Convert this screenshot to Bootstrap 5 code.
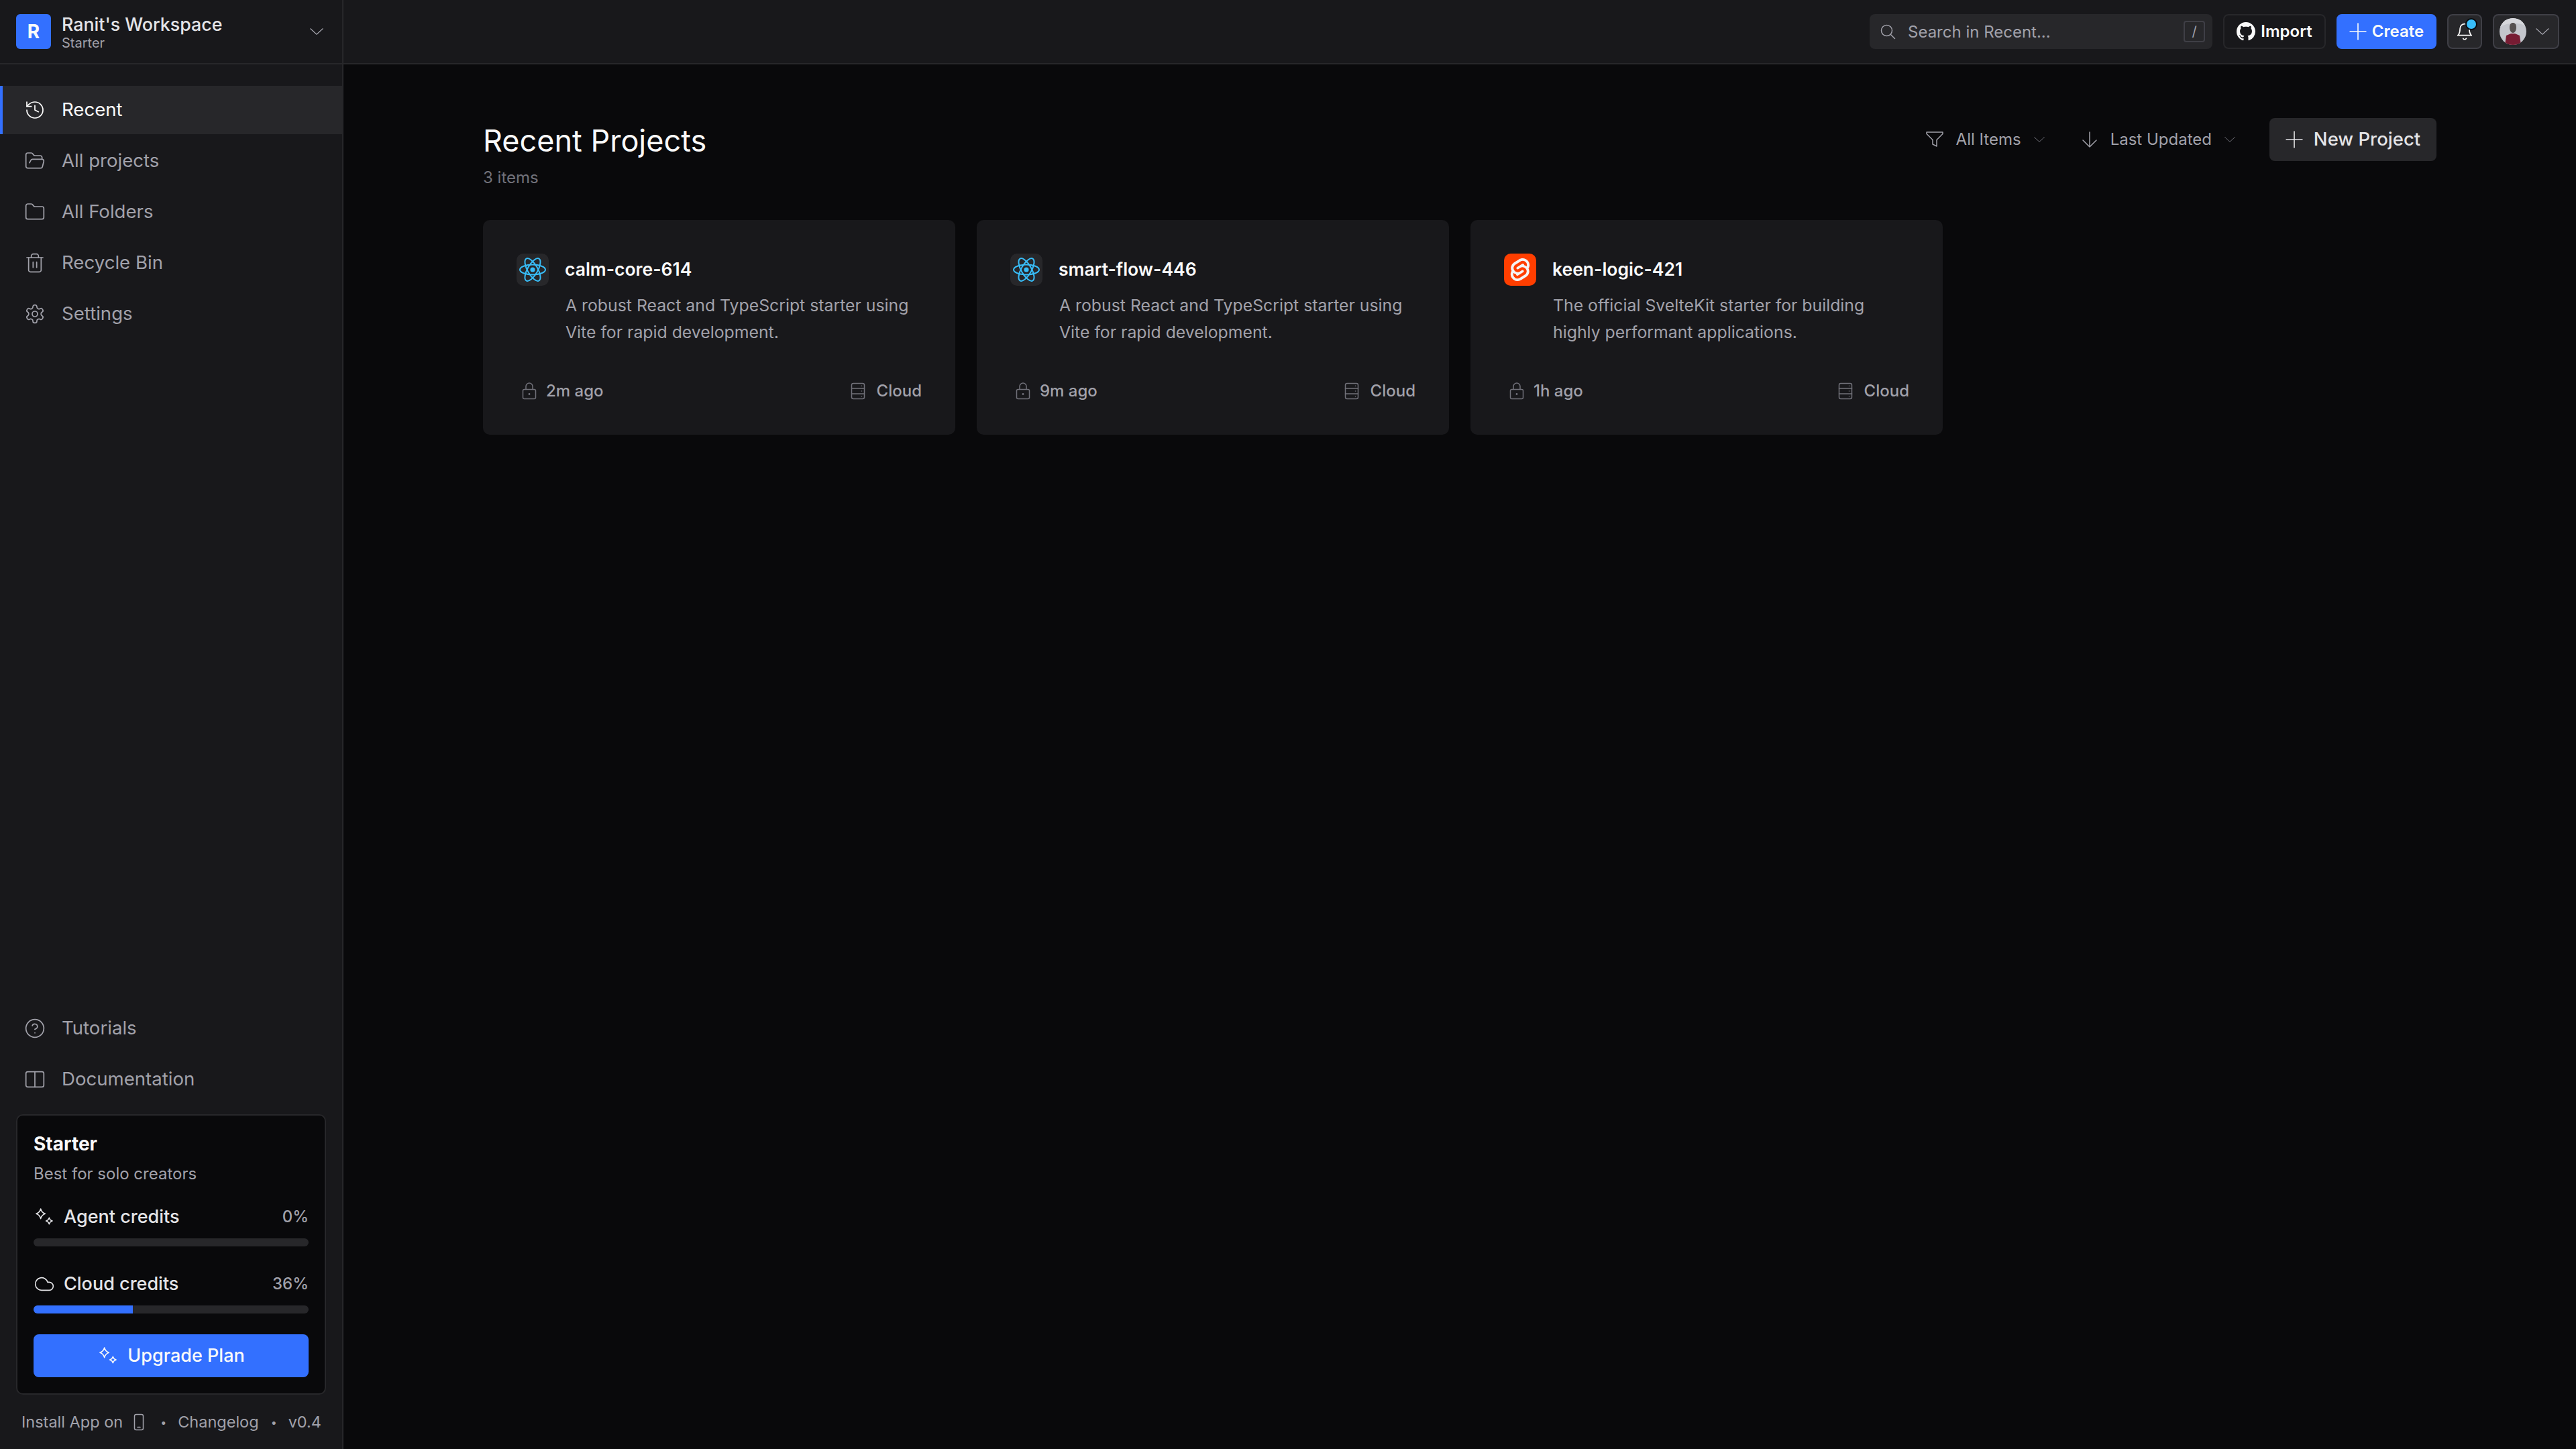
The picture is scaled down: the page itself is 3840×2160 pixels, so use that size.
<!DOCTYPE html>
<html lang="en">
<head>
    <meta charset="UTF-8">
    <title>Recent Projects</title>
    <link href="https://cdn.jsdelivr.net/npm/bootstrap@5.3.0/dist/css/bootstrap.min.css" rel="stylesheet">
    <style>
        body { background: #09090b; color: #fafafa; font-family: "Inter", "Liberation Sans", sans-serif; font-size: 28px; overflow: hidden; }
        svg.ico { fill: none; stroke: currentColor; stroke-width: 1.5; stroke-linecap: round; stroke-linejoin: round; flex-shrink: 0; }
        .app-shell { height: 2160px; }

        /* sidebar */
        .side-panel { width: 512px; background: #18181b; border-right: 2px solid #27272a; }
        .side-head { height: 96px; padding: 0 28px 0 24px; border-bottom: 2px solid #27272a; gap: 16px; }
        .ws-logo { width: 52px; height: 52px; background: #3370ff; border-radius: 6px; font-size: 28px; font-weight: 700; }
        .ws-name { font-size: 26.8px; font-weight: 500; line-height: 34px; color: #e4e4e7; }
        .ws-plan { font-size: 20px; line-height: 22px; color: #a1a1aa; }
        .head-arrow { color: #a1a1aa; }
        .side-nav { padding-top: 32px; gap: 4px; }
        .side-link { height: 72px; padding-left: 32px; gap: 24px; color: #a1a1aa; text-decoration: none; font-size: 27.6px; font-weight: 400; border-left: 4px solid transparent; }
        .side-link svg.ico { stroke-width: 1.3; }
        .side-link.active-link { background: #27272a; color: #fafafa; border-left-color: #3370ff; }
        .plan-box { margin: 0 24px; padding: 24px; height: 418px; background: #09090b; border: 2px solid #27272a; border-radius: 10px; }
        .plan-title { font-size: 28px; font-weight: 700; line-height: 36px; }
        .plan-sub { font-size: 24px; line-height: 30px; color: #a1a1aa; margin-top: 12px; margin-bottom: 33px; }
        .credit-row { font-size: 27px; font-weight: 500; color: #e4e4e7; line-height: 32px; gap: 13px; }
        .credit-row svg.ico { stroke-width: 1.2; }
        .credit-next { margin-top: 40px; }
        .credit-pct { font-size: 24px; color: #a1a1aa; }
        .credit-bar { height: 12px; background: #27272a; border-radius: 6px; overflow: hidden; }
        .credit-fill { background: #3370ff; height: 100%; }
        .upgrade-btn { height: 64px; background: #3370ff; border: 0; border-radius: 8px; color: #fafafa; font-size: 27px; font-weight: 500; gap: 13px; }
        .upgrade-btn svg.ico { stroke-width: 1.2; }
        .side-foot { height: 81px; padding-left: 32px; font-size: 23.5px; color: #a1a1aa; font-weight: 400; }
        .foot-sep { width: 8px; margin: 0 18px; font-size: 16px; text-align: center; }
        .phone-ico { margin: 0 6px 0 16px; }

        /* top bar */
        .top-bar { height: 96px; background: #18181b; border-bottom: 2px solid #27272a; padding-right: 25px; gap: 16px; }
        .search-box { width: 511px; height: 52px; background: #27272a; border-radius: 8px; padding: 0 11px 0 15px; color: #a1a1aa; font-size: 24px; font-weight: 400; }
        .search-text { padding: 2px 0 0 2px; }
        .search-key { width: 32px; height: 32px; border: 2px solid #3f3f46; border-radius: 4px; font-size: 20px; }
        .top-btn { height: 52px; border: 2px solid #27272a; border-radius: 8px; background: transparent; color: #fafafa; font-size: 24px; font-weight: 600; padding: 0; }
        .btn-import { width: 153px; background: #18181b; gap: 8px; }
        .btn-create { width: 149px; background: #3370ff; border-color: #3370ff; gap: 8px; }
        .btn-bell { width: 52px; background: #27272a; border-color: #3f3f46; position: relative; }
        .bell-dot { position: absolute; top: 4px; right: 5px; width: 18px; height: 18px; border-radius: 50%; background: #38bdf8; border: 2.5px solid #09090b; }
        .btn-user { width: 99px; background: #27272a; border-color: #3f3f46; padding-left: 8px; gap: 14px; justify-content: flex-start; }
        .user-pic { width: 40px; height: 40px; border-radius: 50%; }
        .user-arrow { color: #a1a1aa; }

        /* main */
        .page-body { padding: 80px 208px 0; }
        .page-title { font-size: 45px; font-weight: 400; line-height: 58px; margin: 5px 0 0; color: #fafafa; }
        .page-count { font-size: 24px; line-height: 30px; color: #71717a; margin-top: 11px; }
        .filter-item { color: #a1a1aa; font-size: 24px; font-weight: 400; gap: 19px; }
        .filter-first { margin-right: 55px; }
        .filter-last { margin-right: 51px; }
        .new-btn { height: 64px; width: 249px; background: #27272a; border: 0; border-radius: 8px; color: #e4e4e7; font-size: 27.5px; font-weight: 500; gap: 16px; padding: 0; }
        .project-grid { display: grid; grid-template-columns: repeat(4, 704px); gap: 32px; margin-top: 48px; }
        .project-tile { height: 320px; background: #18181b; border-radius: 10px; padding: 50px 50px 0; }
        .tile-icon { width: 48px; height: 48px; border-radius: 10px; background: #27272a; }
        .tile-icon.svelte-bg { background: #ff3e00; }
        .tile-name { font-size: 26.5px; font-weight: 600; color: #fafafa; }
        .tile-desc { font-size: 24.8px; line-height: 40px; color: #a1a1aa; margin: 9px 0 0 73px; }
        .tile-foot { margin-top: 53px; font-size: 24px; font-weight: 500; color: #a1a1aa; line-height: 30px; }
        .foot-ico { color: #71717a; }
        .foot-left { margin-left: 8px; gap: 14px; }
        .foot-right { gap: 17px; }
    </style>
</head>
<body>
<svg width="0" height="0" class="position-absolute">
    <defs>
        <symbol id="i-down" viewBox="0 0 24 24"><path d="M1 7l11 10 11-10"/></symbol>
        <symbol id="i-plus" viewBox="0 0 24 24"><path d="M12 1v22M1 12h22"/></symbol>
        <symbol id="i-spark" viewBox="0 0 24 24"><path d="M8 3c.8 3.2 2 4.5 5 5.5-3 1-4.2 2.3-5 5.5-.8-3.2-2-4.5-5-5.5 3-1 4.2-2.3 5-5.5zM17.5 13c.5 2 1.3 2.8 3.5 3.5-2.2.7-3 1.5-3.5 3.5-.5-2-1.3-2.8-3.5-3.5 2.2-.7 3-1.5 3.5-3.5z"/></symbol>
        <symbol id="i-lock" viewBox="0 0 22 26"><rect x="1.5" y="10.5" width="19" height="14" rx="2"/><path d="M6 10.5V6a5 5 0 0 1 10 0v4.5"/><circle cx="11" cy="17.5" r=".7" fill="currentColor"/></symbol>
        <symbol id="i-server" viewBox="0 0 22 26"><rect x="1.5" y="1.5" width="19" height="23" rx="2.5"/><path d="M1.5 9h19M1.5 17h19M16.5 5.2h.01M16.5 13h.01M16.5 20.8h.01"/></symbol>
        <symbol id="i-react" viewBox="0 0 48 48">
            <circle cx="24" cy="24" r="3.6" fill="#38bdf8" stroke="none"/>
            <g fill="none" stroke="#38bdf8" stroke-width="2">
                <ellipse cx="24" cy="24" rx="19" ry="7.5"/>
                <ellipse cx="24" cy="24" rx="19" ry="7.5" transform="rotate(60 24 24)"/>
                <ellipse cx="24" cy="24" rx="19" ry="7.5" transform="rotate(120 24 24)"/>
            </g>
        </symbol>
    </defs>
</svg>
<div class="app-shell d-flex">
    <aside class="side-panel d-flex flex-column flex-shrink-0">
        <div class="side-head d-flex align-items-center">
            <div class="ws-logo d-flex align-items-center justify-content-center">R</div>
            <div class="flex-grow-1">
                <div class="ws-name">Ranit's Workspace</div>
                <div class="ws-plan">Starter</div>
            </div>
            <svg class="ico head-arrow" width="20" height="20"><use href="#i-down"/></svg>
        </div>
        <nav class="side-nav d-flex flex-column flex-grow-1">
            <a href="#" class="side-link active-link d-flex align-items-center">
                <svg class="ico" width="32" height="32" viewBox="0 0 24 24"><path d="M3 12a9 9 0 1 0 9-9 9.75 9.75 0 0 0-6.74 2.74L3 8"/><path d="M3 3v5h5"/><path d="M12 7v5l4 2"/></svg>Recent</a>
            <a href="#" class="side-link d-flex align-items-center">
                <svg class="ico" width="32" height="32" viewBox="0 0 24 24"><path d="m6 14 1.5-2.9A2 2 0 0 1 9.24 10H20a2 2 0 0 1 1.94 2.5l-1.54 6a2 2 0 0 1-1.95 1.5H4a2 2 0 0 1-2-2V5a2 2 0 0 1 2-2h3.9a2 2 0 0 1 1.69.9l.81 1.2a2 2 0 0 0 1.67.9H18a2 2 0 0 1 2 2v2"/></svg>All projects</a>
            <a href="#" class="side-link d-flex align-items-center">
                <svg class="ico" width="32" height="32" viewBox="0 0 24 24"><path d="M20 20a2 2 0 0 0 2-2V8a2 2 0 0 0-2-2h-7.9a2 2 0 0 1-1.69-.9L9.6 3.9A2 2 0 0 0 7.93 3H4a2 2 0 0 0-2 2v13a2 2 0 0 0 2 2Z"/></svg>All Folders</a>
            <a href="#" class="side-link d-flex align-items-center">
                <svg class="ico" width="32" height="32" viewBox="0 0 24 24"><path d="M3 6h18"/><path d="M19 6v14c0 1-1 2-2 2H7c-1 0-2-1-2-2V6"/><path d="M8 6V4c0-1 1-2 2-2h4c1 0 2 1 2 2v2"/><path d="M10 11v6M14 11v6"/></svg>Recycle Bin</a>
            <a href="#" class="side-link d-flex align-items-center">
                <svg class="ico" width="32" height="32" viewBox="0 0 24 24"><path d="M12.22 2h-.44a2 2 0 0 0-2 2v.18a2 2 0 0 1-1 1.73l-.43.25a2 2 0 0 1-2 0l-.15-.08a2 2 0 0 0-2.73.73l-.22.38a2 2 0 0 0 .73 2.73l.15.1a2 2 0 0 1 1 1.72v.51a2 2 0 0 1-1 1.74l-.15.09a2 2 0 0 0-.73 2.73l.22.38a2 2 0 0 0 2.73.73l.15-.08a2 2 0 0 1 2 0l.43.25a2 2 0 0 1 1 1.73V20a2 2 0 0 0 2 2h.44a2 2 0 0 0 2-2v-.18a2 2 0 0 1 1-1.73l.43-.25a2 2 0 0 1 2 0l.15.08a2 2 0 0 0 2.73-.73l.22-.39a2 2 0 0 0-.73-2.73l-.15-.08a2 2 0 0 1-1-1.74v-.5a2 2 0 0 1 1-1.74l.15-.09a2 2 0 0 0 .73-2.73l-.22-.38a2 2 0 0 0-2.73-.73l-.15.08a2 2 0 0 1-2 0l-.43-.25a2 2 0 0 1-1-1.73V4a2 2 0 0 0-2-2z"/><circle cx="12" cy="12" r="3"/></svg>Settings</a>
            <a href="#" class="side-link d-flex align-items-center mt-auto">
                <svg class="ico" width="32" height="32" viewBox="0 0 24 24"><circle cx="12" cy="12" r="10"/><path d="M9.1 9a3 3 0 0 1 5.8 1c0 2-3 3-3 3"/><path d="M12 17h.01"/></svg>Tutorials</a>
            <a href="#" class="side-link d-flex align-items-center">
                <svg class="ico" width="32" height="32" viewBox="0 0 24 24"><rect x="2" y="3.5" width="20" height="17" rx="2"/><path d="M12 3.5v17"/></svg>Documentation</a>
        </nav>
        <div class="plan-box mt-3 d-flex flex-column">
            <div class="plan-title">Starter</div>
            <div class="plan-sub">Best for solo creators</div>
            <div class="credit-row d-flex align-items-center">
                <svg class="ico" width="32" height="32"><use href="#i-spark"/></svg>
                <span class="flex-grow-1">Agent credits</span><span class="credit-pct">0%</span>
            </div>
            <div class="credit-bar mt-3"></div>
            <div class="credit-row credit-next d-flex align-items-center">
                <svg class="ico" width="32" height="32" viewBox="0 0 24 24"><path d="M17.5 19H9a7 7 0 1 1 6.71-9h1.79a4.5 4.5 0 1 1 0 9Z"/></svg>
                <span class="flex-grow-1">Cloud credits</span><span class="credit-pct">36%</span>
            </div>
            <div class="credit-bar mt-3"><div class="credit-fill" style="width: 36%"></div></div>
            <button class="upgrade-btn d-flex align-items-center justify-content-center mt-auto" type="button">
                <svg class="ico" width="32" height="32"><use href="#i-spark"/></svg>Upgrade Plan</button>
        </div>
        <div class="side-foot d-flex align-items-center">
            <span>Install App on</span>
            <svg class="ico phone-ico" width="16" height="26" viewBox="0 0 16 26"><rect x="1.5" y="1.5" width="13" height="23" rx="2.5"/><path d="M6 20.5h4"/></svg>
            <span class="foot-sep">•</span><span>Changelog</span><span class="foot-sep">•</span><span>v0.4</span>
        </div>
    </aside>

    <div class="flex-grow-1 d-flex flex-column">
        <header class="top-bar d-flex align-items-center justify-content-end">
            <div class="search-box d-flex align-items-center">
                <svg class="ico me-3" width="24" height="24" viewBox="0 0 24 24"><circle cx="10.5" cy="10.5" r="8"/><path d="m16.5 16.5 6 6"/></svg>
                <span class="search-text flex-grow-1">Search in Recent...</span>
                <span class="search-key d-flex align-items-center justify-content-center">/</span>
            </div>
            <button class="top-btn btn-import d-flex align-items-center justify-content-center" type="button">
                <svg width="28" height="28" viewBox="0 0 24 24" fill="currentColor"><path d="M12 0C5.37 0 0 5.37 0 12c0 5.3 3.44 9.8 8.2 11.39.6.11.82-.26.82-.58v-2.03c-3.34.73-4.04-1.61-4.04-1.61-.55-1.39-1.33-1.76-1.33-1.76-1.09-.74.08-.73.08-.73 1.2.08 1.84 1.24 1.84 1.24 1.07 1.83 2.81 1.3 3.49 1 .11-.78.42-1.31.76-1.61-2.67-.3-5.47-1.33-5.47-5.93 0-1.31.47-2.38 1.24-3.22-.12-.3-.54-1.52.12-3.18 0 0 1.01-.32 3.3 1.23.96-.27 1.98-.4 3-.4s2.04.13 3 .4c2.29-1.55 3.3-1.23 3.3-1.23.66 1.66.24 2.88.12 3.18.77.84 1.24 1.91 1.24 3.22 0 4.61-2.81 5.63-5.48 5.92.43.37.81 1.1.81 2.22v3.29c0 .32.22.7.82.58A12 12 0 0 0 24 12c0-6.63-5.37-12-12-12z"/></svg>Import</button>
            <button class="top-btn btn-create d-flex align-items-center justify-content-center" type="button">
                <svg class="ico" width="26" height="26"><use href="#i-plus"/></svg>Create</button>
            <button class="top-btn btn-bell d-flex align-items-center justify-content-center" type="button">
                <svg class="ico" width="28" height="32" viewBox="0 0 24 28"><path d="M6 10a6 6 0 0 1 12 0c0 7 3 9 3 9H3s3-2 3-9"/><path d="M10 23a2.2 2.2 0 0 0 4 0"/></svg>
                <span class="bell-dot"></span>
            </button>
            <button class="top-btn btn-user d-flex align-items-center" type="button">
                <svg class="user-pic" viewBox="0 0 40 40"><rect width="40" height="40" fill="#c4c6cc"/><path d="M0 0h40v12C30 6 10 6 0 14z" fill="#d6d7db"/><path d="M8 40l2-14 7-3h6l7 3 2 14z" fill="#771c33"/><path d="M15 14c0-5 2-7 5-7s5 2 5 7c0 4-2 8-5 8s-5-4-5-8z" fill="#55504f"/></svg>
                <svg class="ico user-arrow" width="20" height="20"><use href="#i-down"/></svg>
            </button>
        </header>
        <main class="page-body flex-grow-1">
            <div class="d-flex justify-content-between align-items-start">
                <div>
                    <h1 class="page-title">Recent Projects</h1>
                    <div class="page-count">3 items</div>
                </div>
                <div class="d-flex align-items-center">
                    <div class="filter-item filter-first d-flex align-items-center">
                        <svg class="ico" width="26" height="24" viewBox="0 0 26 24"><path d="M1 1h24v2.5l-9 9V22l-6-3v-6.500l-9-9z"/></svg>
                        <span>All Items</span>
                        <svg class="ico foot-ico" width="16" height="16"><use href="#i-down"/></svg>
                    </div>
                    <div class="filter-item filter-last d-flex align-items-center">
                        <svg class="ico" width="24" height="24" viewBox="0 0 24 24"><path d="M12 1v22M2 13l10 10 10-10"/></svg>
                        <span>Last Updated</span>
                        <svg class="ico foot-ico" width="16" height="16"><use href="#i-down"/></svg>
                    </div>
                    <button class="new-btn d-flex align-items-center justify-content-center" type="button">
                        <svg class="ico" width="26" height="26"><use href="#i-plus"/></svg>New Project</button>
                </div>
            </div>
            <div class="project-grid">
                <div class="project-tile">
                    <div class="d-flex align-items-center gap-4">
                        <span class="tile-icon d-flex"><svg width="48" height="48"><use href="#i-react"/></svg></span>
                        <span class="tile-name">calm-core-614</span>
                    </div>
                    <p class="tile-desc">A robust React and TypeScript starter using Vite for rapid development.</p>
                    <div class="tile-foot d-flex justify-content-between">
                        <span class="foot-left d-flex align-items-center"><svg class="ico foot-ico" width="22" height="26"><use href="#i-lock"/></svg>2m ago</span>
                        <span class="foot-right d-flex align-items-center"><svg class="ico foot-ico" width="22" height="26"><use href="#i-server"/></svg>Cloud</span>
                    </div>
                </div>
                <div class="project-tile">
                    <div class="d-flex align-items-center gap-4">
                        <span class="tile-icon d-flex"><svg width="48" height="48"><use href="#i-react"/></svg></span>
                        <span class="tile-name">smart-flow-446</span>
                    </div>
                    <p class="tile-desc">A robust React and TypeScript starter using Vite for rapid development.</p>
                    <div class="tile-foot d-flex justify-content-between">
                        <span class="foot-left d-flex align-items-center"><svg class="ico foot-ico" width="22" height="26"><use href="#i-lock"/></svg>9m ago</span>
                        <span class="foot-right d-flex align-items-center"><svg class="ico foot-ico" width="22" height="26"><use href="#i-server"/></svg>Cloud</span>
                    </div>
                </div>
                <div class="project-tile">
                    <div class="d-flex align-items-center gap-4">
                        <span class="tile-icon svelte-bg d-flex align-items-center justify-content-center">
                            <svg width="34" height="34" viewBox="0 0 24 24" fill="#f4f4f5" fill-rule="evenodd"><path d="M20.68 3.17C18.454-.015 14.05-.96 10.864 1.07L5.275 4.63A6.41 6.41 0 0 0 2.38 8.93a6.754 6.754 0 0 0 .665 4.336 6.436 6.436 0 0 0-.96 2.397 6.826 6.826 0 0 0 1.166 5.167c2.229 3.19 6.63 4.135 9.816 2.108l5.59-3.562a6.41 6.41 0 0 0 2.895-4.295 6.755 6.755 0 0 0-.665-4.336 6.437 6.437 0 0 0 .96-2.397 6.827 6.827 0 0 0-1.165-5.168zM10.354 21.125a4.44 4.44 0 0 1-4.765-1.767 4.109 4.109 0 0 1-.703-3.107 3.898 3.898 0 0 1 .134-.522l.105-.321.287.21a7.21 7.21 0 0 0 2.186 1.092l.208.063-.02.208a1.253 1.253 0 0 0 .226.83 1.337 1.337 0 0 0 1.435.533 1.231 1.231 0 0 0 .343-.15l5.59-3.562a1.164 1.164 0 0 0 .524-.778 1.242 1.242 0 0 0-.211-.937 1.338 1.338 0 0 0-1.435-.533 1.23 1.23 0 0 0-.343.15l-2.133 1.36a4.078 4.078 0 0 1-1.135.499 4.44 4.44 0 0 1-4.765-1.766 4.108 4.108 0 0 1-.702-3.108 3.855 3.855 0 0 1 1.742-2.582l5.589-3.563a4.072 4.072 0 0 1 1.135-.499 4.44 4.44 0 0 1 4.765 1.767 4.109 4.109 0 0 1 .703 3.107 3.943 3.943 0 0 1-.134.522l-.105.321-.286-.21a7.204 7.204 0 0 0-2.187-1.093l-.208-.063.02-.207a1.255 1.255 0 0 0-.226-.831 1.337 1.337 0 0 0-1.435-.532 1.231 1.231 0 0 0-.343.15L8.62 9.368a1.162 1.162 0 0 0-.524.778 1.24 1.24 0 0 0 .211.937 1.338 1.338 0 0 0 1.435.533 1.235 1.235 0 0 0 .344-.151l2.132-1.36a4.067 4.067 0 0 1 1.135-.498 4.44 4.44 0 0 1 4.765 1.766 4.108 4.108 0 0 1 .702 3.108 3.857 3.857 0 0 1-1.742 2.583l-5.589 3.562a4.072 4.072 0 0 1-1.135.499z"/></svg>
                        </span>
                        <span class="tile-name">keen-logic-421</span>
                    </div>
                    <p class="tile-desc">The official SvelteKit starter for building highly performant applications.</p>
                    <div class="tile-foot d-flex justify-content-between">
                        <span class="foot-left d-flex align-items-center"><svg class="ico foot-ico" width="22" height="26"><use href="#i-lock"/></svg>1h ago</span>
                        <span class="foot-right d-flex align-items-center"><svg class="ico foot-ico" width="22" height="26"><use href="#i-server"/></svg>Cloud</span>
                    </div>
                </div>
            </div>
        </main>
    </div>
</div>
<script src="https://cdn.jsdelivr.net/npm/bootstrap@5.3.0/dist/js/bootstrap.bundle.min.js"></script>
</body>
</html>
